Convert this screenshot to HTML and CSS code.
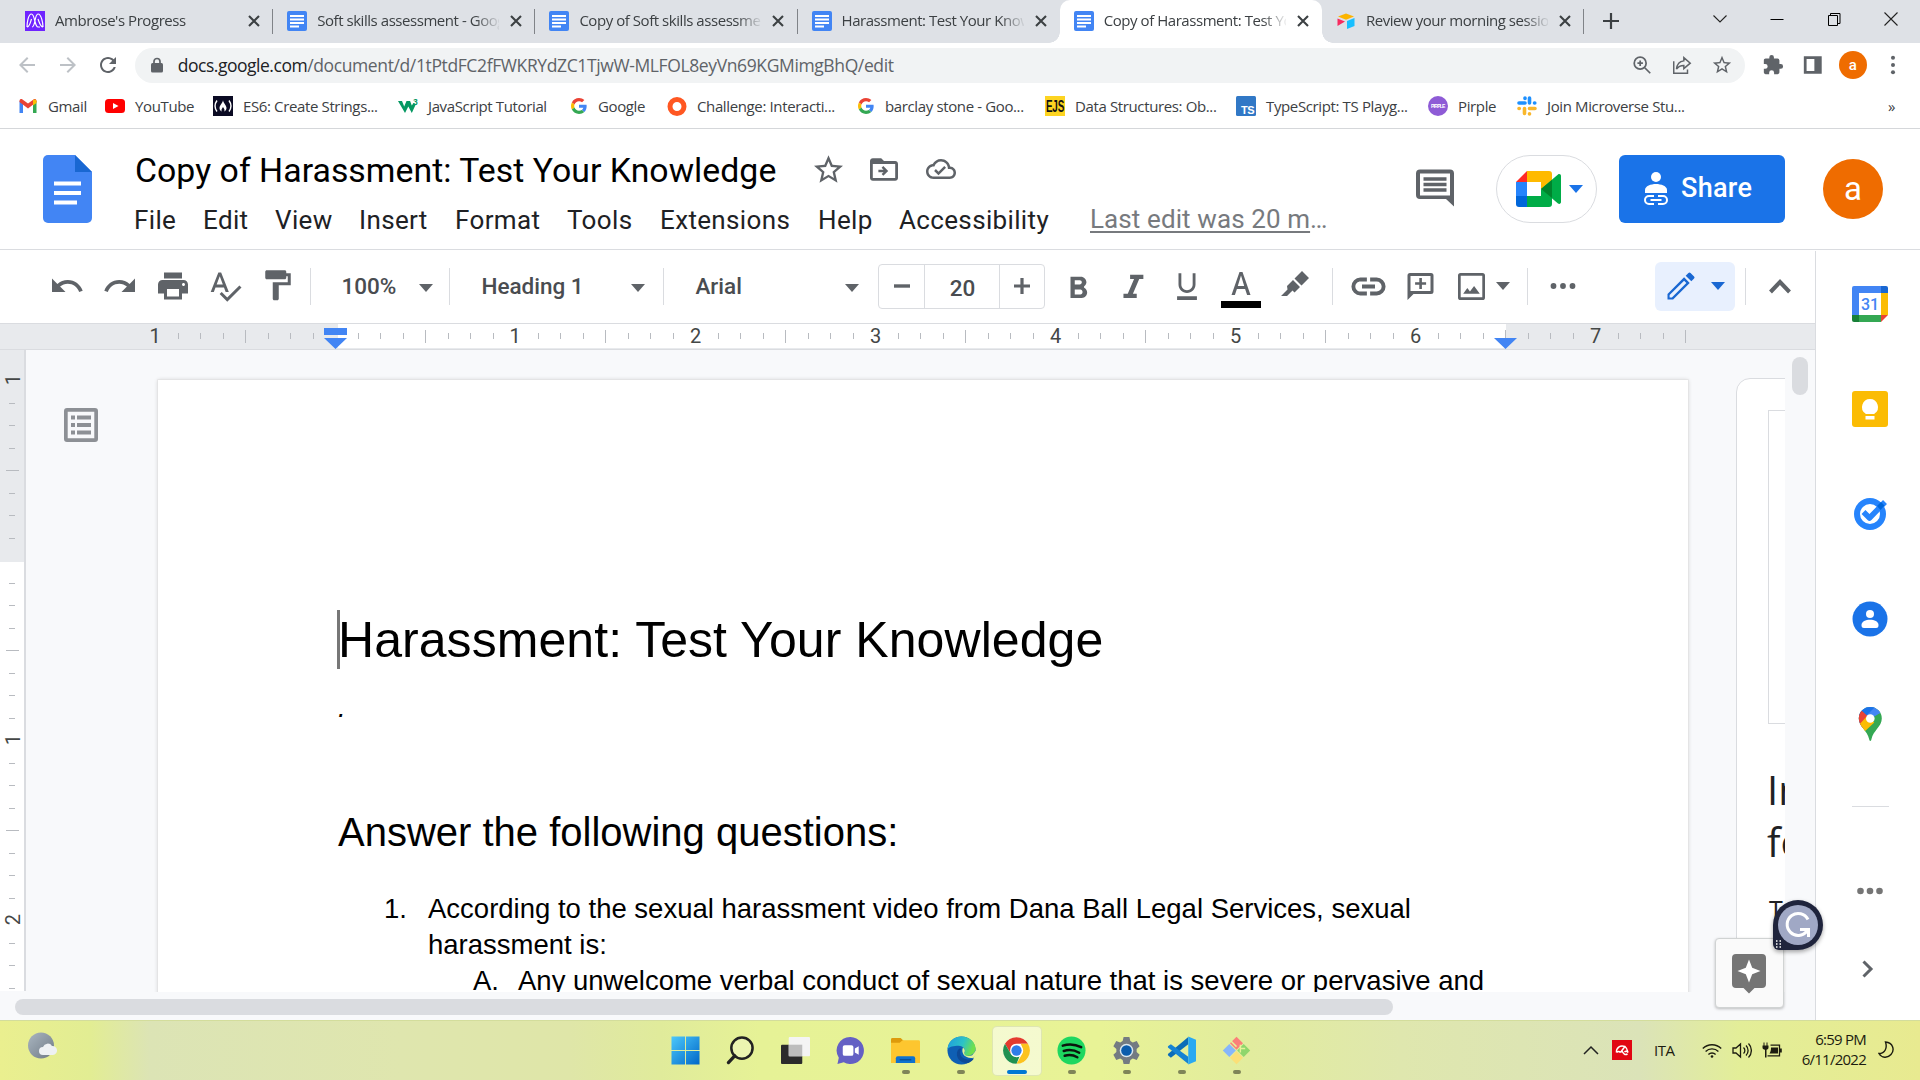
FILE: index.html
```html
<!DOCTYPE html>
<html lang="en">
<head>
<meta charset="utf-8">
<title>Copy of Harassment: Test Your Knowledge</title>
<link rel="stylesheet" href="styles.css">
</head>
<body>
<svg class="defs" width="0" height="0">
  <symbol id="docs" viewBox="0 0 20 20"><rect width="20" height="20" rx="2" fill="#4285f4"/><path d="M3 5h14M3 8.6h14M3 12h14M3 15.4h9" stroke="#fff" stroke-width="2" fill="none"/></symbol>
  <symbol id="x" viewBox="0 0 14 14"><path d="M2 2l10 10M12 2L2 12" stroke="#3c4043" stroke-width="2.1" fill="none"/></symbol>
  <symbol id="g" viewBox="0 0 48 48"><path fill="#ea4335" d="M24 9.5c3.54 0 6.71 1.22 9.21 3.6l6.85-6.85C35.9 2.38 30.47 0 24 0 14.62 0 6.51 5.38 2.56 13.22l7.98 6.19C12.43 13.72 17.74 9.5 24 9.5z"/><path fill="#4285f4" d="M46.98 24.55c0-1.57-.15-3.09-.38-4.55H24v9.02h12.94c-.58 2.96-2.26 5.48-4.78 7.18l7.73 6c4.51-4.18 7.09-10.36 7.09-17.65z"/><path fill="#fbbc05" d="M10.53 28.59c-.48-1.45-.76-2.99-.76-4.59s.27-3.14.76-4.59l-7.98-6.19C.92 16.46 0 20.12 0 24s.92 7.54 2.56 10.78l7.97-6.19z"/><path fill="#34a853" d="M24 48c6.48 0 11.93-2.13 15.89-5.81l-7.73-6c-2.15 1.45-4.92 2.3-8.16 2.3-6.26 0-11.57-4.22-13.47-9.91l-7.98 6.19C6.51 42.62 14.62 48 24 48z"/></symbol>
  <symbol id="caret" viewBox="0 0 14 8"><path d="M0 0h14L7 8z" fill="currentColor"/></symbol>
</svg>

<div class="tabs">
  <div class="tab"><svg class="fav" viewBox="0 0 20 20"><rect width="20" height="20" fill="#6f23ff"/><path d="M2 16c0-3 1-13 4.500-13S9.500 16 13 16s0 0 0 0M7 16c3.500 0 2.500-13 6-13S18 13 18 16M2 16c2.500 0 3-3.500 4.500-8M18 16c-2.500 0-3.500-4-5-8" fill="none" stroke="#fff" stroke-width="1.200"/></svg><span class="tt">Ambrose's Progress</span><svg class="x"><use href="#x"/></svg></div>
  <div class="tab"><svg class="fav"><use href="#docs"/></svg><span class="tt">Soft skills assessment - Google</span><svg class="x"><use href="#x"/></svg></div>
  <div class="tab"><svg class="fav"><use href="#docs"/></svg><span class="tt">Copy of Soft skills assessment</span><svg class="x"><use href="#x"/></svg></div>
  <div class="tab last"><svg class="fav"><use href="#docs"/></svg><span class="tt">Harassment: Test Your Knowledge</span><svg class="x"><use href="#x"/></svg></div>
  <div class="tab active"><svg class="fav"><use href="#docs"/></svg><span class="tt">Copy of Harassment: Test Your</span><svg class="x"><use href="#x"/></svg></div>
  <div class="tab"><svg class="fav" viewBox="0 0 20 20"><path d="M10 2.500l8 3-8 3.300-8-3.300z" fill="#fcb400"/><path d="M11 10l7.500-3v8L11 18z" fill="#18bfff"/><path d="M1.500 7.500L9 10.500 1.500 15z" fill="#f82b60"/></svg><span class="tt">Review your morning session</span><svg class="x"><use href="#x"/></svg></div>
  <svg class="plus" viewBox="0 0 16 16"><path d="M8 0v16M0 8h16" stroke="#3c4043" stroke-width="2.2"/></svg>
  <div class="win">
    <svg viewBox="0 0 16 16"><path d="M1.500 4.500L8 11l6.500-6.500" fill="none" stroke="#222" stroke-width="1.100"/></svg>
    <svg viewBox="0 0 16 16"><path d="M1.500 8.500h13" stroke="#000"/></svg>
    <svg viewBox="0 0 16 16"><path d="M2.500 4.500h9v10h-9zM4.500 4.500v-2h9.500v10h-2.500" fill="none" stroke="#000"/></svg>
    <svg viewBox="0 0 16 16"><path d="M1.500 1.500l13 13M14.500 1.500l-13 13" stroke="#222" stroke-width="1.100"/></svg>
  </div>
</div>

<div class="nav">
  <div class="slots nav-left">
    <svg viewBox="0 0 24 24"><path fill="#bdc1c6" d="M20 11H7.830l5.590-5.590L12 4l-8 8 8 8 1.410-1.410L7.830 13H20z"/></svg>
    <svg viewBox="0 0 24 24"><path fill="#bdc1c6" d="M12 4l-1.410 1.410L16.170 11H4v2h12.170l-5.580 5.590L12 20l8-8z"/></svg>
    <svg viewBox="0 0 24 24"><path fill="#5f6368" d="M17.650 6.350C16.200 4.900 14.210 4 12 4c-4.420 0-7.990 3.580-7.990 8s3.570 8 7.990 8c3.730 0 6.840-2.550 7.730-6h-2.080c-.82 2.330-3.040 4-5.650 4-3.310 0-6-2.690-6-6s2.690-6 6-6c1.660 0 3.140.69 4.220 1.780L13 11h7V4z"/></svg>
  </div>
  <div class="omni">
    <svg class="lock" viewBox="0 0 12 16"><path d="M3 7V4.500a3 3 0 016 0V7" fill="none" stroke="#5f6368" stroke-width="1.700"/><rect y="6" width="12" height="9.500" rx="1.500" fill="#5f6368"/></svg>
    <span class="url"><b>docs.google.com</b>/document/d/1tPtdFC2fFWKRYdZC1TjwW-MLFOL8eyVn69KGMimgBhQ/edit</span>
    <div class="slots omni-right">
      <svg viewBox="0 0 24 24" fill="none" stroke="#5f6368" stroke-width="1.900"><circle cx="10" cy="10" r="6.500"/><path d="M15 15l6 6M10 7v6M7 10h6"/></svg>
      <svg viewBox="0 0 24 24" fill="none" stroke="#5f6368" stroke-width="1.600"><path d="M3 8v13h15v-4M14 4l7 6-7 6v-3.500c-4 0-6 1-8 4 .5-5 3-8.500 8-9z"/></svg>
      <svg viewBox="0 0 24 24"><path fill="#5f6368" d="M22 9.240l-7.190-.62L12 2 9.190 8.630 2 9.240l5.460 4.730L5.820 21 12 17.270 18.180 21l-1.630-7.030zM12 15.400l-3.760 2.270 1-4.280-3.320-2.880 4.380-.38L12 6.100l1.710 4.040 4.380.38-3.320 2.880 1 4.280z"/></svg>
    </div>
  </div>
  <div class="slots nav-right">
    <svg viewBox="0 0 24 24"><path fill="#5f6368" d="M20.500 11H19V7c0-1.100-.9-2-2-2h-4V3.500a2.500 2.500 0 00-5 0V5H4c-1.100 0-2 .9-2 2v3.800h1.500a2.700 2.700 0 010 5.400H2V20c0 1.100.9 2 2 2h3.800v-1.500a2.700 2.700 0 015.400 0V22H17c1.100 0 2-.9 2-2v-4h1.500a2.500 2.500 0 000-5z"/></svg>
    <svg viewBox="0 0 24 24"><path fill="#5f6368" fill-rule="evenodd" d="M2 2.500h19.500v19H2zM5 5.500v13h8.500v-13z"/></svg>
    <span class="ava">a</span>
    <svg viewBox="0 0 24 24" fill="#5f6368"><circle cx="12" cy="4" r="2.200"/><circle cx="12" cy="12" r="2.200"/><circle cx="12" cy="20" r="2.200"/></svg>
  </div>
</div>

<div class="marks">
  <span><svg viewBox="0 0 20 20"><path d="M1.500 17V5l3.500 2.500V17z" fill="#4285f4"/><path d="M15 17V7.500L18.500 5v12z" fill="#34a853"/><path d="M1.500 5c0-2 2-2.500 3-1.500l5.500 4 5.500-4c1-1 3-.5 3 1.500v1L10 12.500 1.500 6z" fill="#ea4335"/><path d="M15 4c1.500-1.200 3.500-.5 3.500 1.200V7L15 9.500z" fill="#fbbc04"/></svg>Gmail</span>
  <span><svg viewBox="0 0 20 20"><rect y="3" width="20" height="14" rx="3.500" fill="#f00"/><path d="M8 7l5.500 3L8 13z" fill="#fff"/></svg>YouTube</span>
  <span><svg viewBox="0 0 20 20"><rect width="20" height="20" fill="#0a0a23"/><path d="M4 4.500c-2.500 3.500-2.500 7.500 0 11M16 4.500c2.500 3.500 2.500 7.500 0 11" stroke="#fff" stroke-width="1.400" fill="none"/><path d="M10 4c0 3-3.500 5-3.500 8 0 1.800 1.200 3 2.200 3.400-.8-2 .6-2.900 1.300-4.400.7 1.500 2.100 2.400 1.300 4.400 1-.4 2.200-1.600 2.200-3.400 0-3-3.500-5-3.500-8z" fill="#fff"/></svg>ES6: Create Strings...</span>
  <span><svg viewBox="0 0 20 20"><path d="M0 5h4l2.200 5.500L8.500 5h3.600l1.700 4.500L15.500 7l2 2-3.700 8-3.500-6.500L7 17z" fill="#059862"/><text x="15" y="8.500" font-family="Liberation Sans" font-size="8.500" font-weight="700" fill="#059862">3</text></svg>JavaScript Tutorial</span>
  <span><svg class="sm"><use href="#g"/></svg>Google</span>
  <span><svg viewBox="0 0 20 20"><circle cx="10" cy="10.500" r="7" fill="none" stroke="#ff5722" stroke-width="5"/></svg>Challenge: Interacti...</span>
  <span><svg class="sm"><use href="#g"/></svg>barclay stone - Goo...</span>
  <span><svg viewBox="0 0 20 20"><rect width="20" height="20" fill="#fdd421"/><text x="1" y="16" font-family="Liberation Sans" font-size="16" font-weight="700" textLength="18" lengthAdjust="spacingAndGlyphs" fill="#111">EJS</text></svg>Data Structures: Ob...</span>
  <span><svg viewBox="0 0 20 20"><rect width="20" height="20" rx="1.500" fill="#3178c6"/><text x="5" y="18" font-family="Liberation Sans" font-size="11" font-weight="700" fill="#fff">TS</text></svg>TypeScript: TS Playg...</span>
  <span><svg viewBox="0 0 20 20"><circle cx="10" cy="10" r="10" fill="#8e5bd6"/><text x="3" y="12" font-family="Liberation Sans" font-size="5" font-weight="700" textLength="14" fill="#fff">PIRPLE</text></svg>Pirple</span>
  <span><svg viewBox="0 0 20 20" stroke-width="3.600" stroke-linecap="round"><path d="M8 2v.5M2 7h6M12.500 2v5M17.500 7h.3" stroke="#1e90ff"/><path d="M2 12.500h.3M7.500 12.500v5M12.500 12.500h5.500M12.500 17.800v.2" stroke="#f9b72c"/></svg>Join Microverse Stu...</span>
  <span class="more">»</span>
</div>

<div class="head">
  <svg class="logo" viewBox="0 0 49 68"><path d="M5 0h27l17 17v46a5 5 0 01-5 5H5a5 5 0 01-5-5V5a5 5 0 015-5z" fill="#4285f4"/><path d="M32 0l17 17H32z" fill="#1967d2"/><path d="M11 28.500h27M11 38h27M11 47.500h23" stroke="#fff" stroke-width="4"/></svg>
  <div class="titles">
    <div class="title">Copy of Harassment: Test Your Knowledge
      <svg class="star" viewBox="2 2 20 19"><path fill="#5f6368" d="M22 9.240l-7.190-.62L12 2 9.190 8.630 2 9.240l5.460 4.730L5.820 21 12 17.270 18.180 21l-1.630-7.030zM12 15.400l-3.760 2.270 1-4.280-3.320-2.880 4.380-.38L12 6.100l1.710 4.040 4.380.38-3.320 2.880 1 4.280z"/></svg>
      <svg class="folder" viewBox="2 4 20 16"><path fill="#5f6368" d="M20 6h-8l-2-2H4c-1.100 0-2 .9-2 2v12c0 1.100.9 2 2 2h16c1.100 0 2-.9 2-2V8c0-1.100-.9-2-2-2zm0 12H4V8h16zM11.500 9.500l3.500 3.500-3.500 3.500-1.200-1.200 1.400-1.400H8v-1.800h3.700l-1.400-1.400z"/></svg>
      <svg class="cloud" viewBox="0 4 24 16"><path fill="#5f6368" d="M19.350 10.040C18.670 6.590 15.640 4 12 4 9.110 4 6.600 5.640 5.350 8.040 2.340 8.360 0 10.910 0 14c0 3.310 2.690 6 6 6h13c2.760 0 5-2.240 5-5 0-2.640-2.050-4.780-4.650-4.960zM19 18H6c-2.210 0-4-1.790-4-4s1.790-4 4-4h.71C7.370 7.690 9.480 6 12 6c3.040 0 5.500 2.460 5.500 5.500v.5H19c1.660 0 3 1.340 3 3s-1.340 3-3 3zm-9-3.820l-2.090-2.090L6.500 13.500 10 17l6.010-6.010-1.410-1.410z"/></svg>
    </div>
    <div class="menu"><span>File</span><span>Edit</span><span>View</span><span>Insert</span><span>Format</span><span>Tools</span><span>Extensions</span><span>Help</span><span>Accessibility</span><span class="last-edit"><u>Last edit was 20 m</u>…</span></div>
  </div>
  <svg class="cmt" viewBox="0 0 38 37"><path fill="#5f6368" fill-rule="evenodd" d="M4 0h30a4 4 0 014 4v33l-8-7.500H4a4 4 0 01-4-4V4a4 4 0 014-4zM4 4v22h30V4z"/><path d="M7.500 9.500h23M7.500 15h23M7.500 20.500h23" stroke="#5f6368" stroke-width="3.600"/></svg>
  <div class="meet">
    <svg class="cam" viewBox="0 0 45 36"><path d="M0 11L11 0v11z" fill="#ff2a26"/><path d="M0 11h11v14H0z" fill="#2684fc"/><path d="M0 25h11v11H3a3 3 0 01-3-3z" fill="#0066da"/><path d="M11 0h22a3 3 0 013 3v10l-11 6v-8H11z" fill="#ffba00"/><path d="M11 25h14v-7l11 7v8a3 3 0 01-3 3H11z" fill="#00ac47"/><path d="M25 18l17-14.500c1.500-1 3 0 3 1.500v26c0 1.500-1.500 2.500-3 1.500z" fill="#00ac47"/><path d="M25 18l11-9v18z" fill="#00832d"/></svg>
    <svg class="caret blue"><use href="#caret"/></svg>
  </div>
  <div class="share"><svg viewBox="0 0 26 34"><circle cx="13" cy="5" r="5" fill="#fff"/><path d="M2 21v-3c0-4 6-6 11-6s11 2 11 6v3z" fill="#fff"/><path d="M11 24H6a4 4 0 000 8h5M15 24h5a4 4 0 010 8h-5M7.500 28h11" fill="none" stroke="#fff" stroke-width="2"/></svg>Share</div>
  <div class="avatar">a</div>
</div>

<div class="main">
  <div class="left">
    <div class="bar">
      <i class="ic"><svg viewBox="0 0 24 24"><path d="M12.500 8c-2.650 0-5.050.99-6.900 2.600L2 7v9h9l-3.620-3.620c1.390-1.160 3.160-1.880 5.120-1.880 3.540 0 6.550 2.310 7.600 5.500l2.370-.78C21.080 11.030 17.150 8 12.500 8z"/></svg></i>
      <i class="ic"><svg viewBox="0 0 24 24"><path d="M18.400 10.600C16.550 8.990 14.150 8 11.500 8c-4.650 0-8.580 3.030-9.960 7.220L3.900 16c1.050-3.190 4.050-5.500 7.600-5.500 1.950 0 3.730.72 5.120 1.880L13 16h9V7z"/></svg></i>
      <i class="ic"><svg viewBox="0 0 24 24"><path d="M19 8H5c-1.660 0-3 1.340-3 3v6h4v4h12v-4h4v-6c0-1.660-1.340-3-3-3zm-3 11H8v-5h8zm3-7c-.55 0-1-.45-1-1s.45-1 1-1 1 .45 1 1-.45 1-1 1zm-1-9H6v4h12z"/></svg></i>
      <i class="ic"><svg viewBox="0 0 24 24"><path d="M12.450 16h2.090L9.430 3H7.570L2.460 16h2.090l1.120-3h5.640zm-6.020-5L8.500 5.480 10.570 11zm15.160.59l-8.090 8.090L9.830 16l-1.410 1.410 5.090 5.090L23 13z"/></svg></i>
      <i class="ic"><svg viewBox="0 0 24 24"><path d="M18 4V3c0-.55-.45-1-1-1H5c-.55 0-1 .45-1 1v4c0 .55.45 1 1 1h12c.55 0 1-.45 1-1V6h1v4H9v11c0 .55.450 1 1 1h2c.550 0 1-.450 1-1v-9h8V4z" transform="translate(-.5 -.5)"/></svg></i>
      <i class="sep s1"></i>
      <span class="dd d1">100%<svg class="caret"><use href="#caret"/></svg></span>
      <i class="sep s2"></i>
      <span class="dd d2">Heading 1<svg class="caret"><use href="#caret"/></svg></span>
      <i class="sep s3"></i>
      <span class="dd d2">Arial<svg class="caret"><use href="#caret"/></svg></span>
      <span class="size"><span><svg viewBox="0 0 16 16"><path d="M0 8h16" stroke="#5f6368" stroke-width="3.400"/></svg></span><span class="num">20</span><span><svg viewBox="0 0 16 16"><path d="M0 8h16M8 0v16" stroke="#5f6368" stroke-width="3.200"/></svg></span></span>
      <i class="ic w b"><svg viewBox="0 0 24 24"><path d="M15.600 10.790c.97-.67 1.650-1.770 1.650-2.790 0-2.260-1.750-4-4-4H6v15h8.040c2.090 0 3.710-1.700 3.710-3.790 0-1.520-.86-2.820-2.150-3.420zM9 6.500h3.500c.83 0 1.500.67 1.500 1.500s-.67 1.500-1.500 1.500H9zm4 10H9v-3.500h4c.83 0 1.500.67 1.500 1.750S13.830 16.500 13 16.500z"/></svg></i>
      <i class="ic w"><svg viewBox="1.500 0.500 20.500 20.500"><path d="M10 4v2.600h2.400l-3.800 8.800H6V18h8v-2.600h-2.300l3.800-8.800H18V4z"/></svg></i>
      <i class="ic w"><svg viewBox="0 0 24 24"><path d="M12 17c3.310 0 6-2.690 6-6V3h-2v8c0 2.200-1.800 4-4 4s-4-1.800-4-4V3H6v8c0 3.310 2.690 6 6 6zm-7 2.300v2.500h14v-2.500z"/></svg></i>
      <i class="ic w col"><svg viewBox="0 0 40 40"><path d="M18.500 4h3l8 23h-3.400l-2-6h-8.200l-2 6h-3.400zm-1.700 14h6.400L20 7.500z"/><path d="M0 33h40v7H0z" fill="#000"/></svg></i>
      <i class="ic w"><svg viewBox="0 0 34 34"><path d="M24 2l7 7-7.500 7.500-7-7zM15 11l7 7-5.500 5.500-2-2L9 27H3l6.500-6.500-.5-3.500z"/></svg></i>
      <i class="sep s4"></i>
      <i class="ic l"><svg viewBox="0 0 24 24"><path d="M3.900 12c0-1.710 1.390-3.100 3.100-3.100h4V6.500H7a5.500 5.500 0 000 11h4v-2.400H7c-1.710 0-3.100-1.390-3.100-3.100zM8 13.200h8v-2.400H8zm9-6.700h-4v2.400h4a3.100 3.100 0 010 6.200h-4v2.400h4a5.500 5.500 0 000-11z"/></svg></i>
      <i class="ic l2"><svg viewBox="0 0 26 27"><path fill-rule="evenodd" d="M2.500 0h21A2.500 2.500 0 0126 2.500v16a2.500 2.500 0 01-2.500 2.500H6l-6 6V2.500A2.500 2.500 0 012.500 0zM3 3v15h20V3zM11.800 5h2.600v4.200h4.200v2.600h-4.200V16h-2.600v-4.200H7.600V9.200h4.200z"/></svg></i>
      <i class="ic l3"><svg viewBox="0 0 26 26"><path fill-rule="evenodd" d="M2.500 0h21A2.500 2.500 0 0126 2.500v21a2.500 2.500 0 01-2.500 2.500h-21A2.500 2.500 0 010 23.500v-21A2.500 2.500 0 012.500 0zM2.600 2.600v20.800h20.800V2.600zM5 20l4-5.500 2.500 3.300 4-5.300L21 20z"/></svg></i>
      <svg class="caret"><use href="#caret"/></svg>
      <i class="sep s5"></i>
      <i class="ic dots"><svg viewBox="0 0 26 26"><circle cx="3.500" cy="13" r="2.900"/><circle cx="13" cy="13" r="2.900"/><circle cx="22.500" cy="13" r="2.900"/></svg></i>
      <span class="pen"><svg viewBox="2 2 20 20"><path fill="#1967d2" d="M3 17.250V21h3.750L17.810 9.940l-3.750-3.750zM5.920 19.600H4.400v-1.520l9.660-9.660 1.520 1.520zM20.710 7.040a1 1 0 000-1.410l-2.340-2.340a1 1 0 00-1.410 0l-1.830 1.830 3.750 3.750z"/></svg><svg class="caret"><use href="#caret"/></svg></span>
      <i class="sep s6"></i>
      <i class="ic up"><svg viewBox="0 0 22 16"><path d="M1.500 14L11 4l9.500 10" fill="none" stroke="#5f6368" stroke-width="4"/></svg></i>
    </div>
    <svg class="ruler" viewBox="0 323 1815 27">
      <defs><pattern id="h" patternUnits="userSpaceOnUse" x="245" y="0" width="180" height="400"><path fill="#b8bbc0" d="M0 330h1v13H0zM23 333h1v6h-1zM45 333h1v6h-1zM68 333h1v6h-1zM113 333h1v6h-1zM135 333h1v6h-1zM158 333h1v6h-1z"/></pattern></defs>
      <rect y="323" width="1815" height="27" fill="#e8eaed"/><rect x="338" y="323" width="1168" height="25" fill="#fff"/>
      <path d="M0 323.500h1815M0 349.500h1815" stroke="#dadce0"/>
      <rect x="160" y="324" width="1527" height="24" fill="url(#h)"/><rect x="1505" y="330" width="1" height="13" fill="#b8bbc0"/>
      <g class="rt"><text x="155" y="343">1</text><text x="515" y="343">1</text><text x="695.500" y="343">2</text><text x="875.500" y="343">3</text><text x="1055.500" y="343">4</text><text x="1235.500" y="343">5</text><text x="1415.500" y="343">6</text><text x="1595.500" y="343">7</text></g>
      <path d="M324 328h23v7h-23zM324 338h23l-11.500 11zM1494 338h23l-11.500 11z" fill="#4285f4"/>
    </svg>
    <div class="work">
      <svg class="vruler" viewBox="0 350 26 641">
        <defs><pattern id="v" patternUnits="userSpaceOnUse" x="0" y="470" width="30" height="180"><path fill="#b8bbc0" d="M6 0h13v1H6zM9 23h6v1H9zM9 45h6v1H9zM9 68h6v1H9zM9 113h6v1H9zM9 135h6v1H9zM9 158h6v1H9z"/></pattern></defs>
        <rect y="350" width="26" height="212" fill="#e8eaed"/><rect y="562" width="24" height="429" fill="#fff"/><path d="M25 350v641" stroke="#dadce0" stroke-width="2"/>
        <rect y="400" width="24" height="591" fill="url(#v)"/>
        <g class="rt"><text transform="translate(20 379.500) rotate(-90)">1</text><text transform="translate(20 739.500) rotate(-90)">1</text><text transform="translate(20 919.500) rotate(-90)">2</text></g>
      </svg>
      <div class="outline"><svg viewBox="0 0 34 34" fill="#8d9095"><path fill-rule="evenodd" d="M3 0h28a3 3 0 013 3v28a3 3 0 01-3 3H3a3 3 0 01-3-3V3a3 3 0 013-3zM3.700 3.700v26.600h26.600V3.700z"/><path d="M7 7.500h4v4H7zM13 7.500h14v4H13zM7 15h4v4H7zM13 15h14v4H13zM7 22.500h4v4H7zM13 22.500h14v4H13z"/></svg></div>
      <div class="page">
        <h1><i class="cursor"></i>Harassment: Test Your Knowledge</h1>
        <p class="dot"><em>.</em></p>
        <h2>Answer the following questions:</h2>
        <div class="li"><span>1.</span><div>According to the sexual harassment video from Dana Ball Legal Services, sexual<br>harassment is:</div></div>
        <div class="li sub"><span>A.</span><div>Any unwelcome verbal conduct of sexual nature that is severe or pervasive and</div></div>
      </div>
      <div class="clip"><div class="card"><div class="inner"></div><div class="ct">Introduction<br>for</div><div class="cs">Try<br>(<br>(</div></div></div>
      <div class="vthumb"></div>
    </div>
    <div class="hscroll"><div class="hthumb"></div></div>
    <div class="explore"><svg viewBox="0 0 34 40"><path d="M4 0h26a4 4 0 014 4v26a4 4 0 01-4 4h-7.500L17 39.500 11.500 34H4a4 4 0 01-4-4V4a4 4 0 014-4z" fill="#757575"/><path d="M17 5.500l3.200 8.300L28.500 17l-8.300 3.200L17 28.500l-3.200-8.300L5.500 17l8.300-3.200z" fill="#fff"/></svg></div>
    <svg class="gram" viewBox="0 0 50 50"><path d="M25 0a25 25 0 010 50H6a6 6 0 01-6-6V25A25 25 0 0125 0z" fill="#1f243c"/><circle cx="25" cy="25" r="20" fill="#a0a8c5"/><path d="M35 19.500A11 11 0 1034 31" fill="none" stroke="#fff" stroke-width="3"/><path d="M27 29.500h8.500V37" fill="none" stroke="#fff" stroke-width="3"/><path d="M3 41h1.500M6.500 41H8M3 44h1.500M6.500 44H8M3 47h1.500M6.500 47H8" stroke="#fff" stroke-width="1.300"/></svg>
  </div>
  <div class="side">
    <svg viewBox="0 0 36 36"><path d="M2 0h27v7H7v22H0V2a2 2 0 012-2z" fill="#4285f4"/><path d="M29 0h5a2 2 0 012 2v5h-7z" fill="#1967d2"/><path d="M29 7h7v22h-7z" fill="#fbbc04"/><path d="M7 29h22v7H7z" fill="#34a853"/><path d="M0 29h7v7H2a2 2 0 01-2-2z" fill="#188038"/><path d="M29 29h7l-7 7z" fill="#ea4335"/><path d="M7 7h22v22H7z" fill="#fff"/><text x="18" y="24" text-anchor="middle" font-family="Roboto" font-size="16" font-weight="500" fill="#4285f4">31</text></svg>
    <svg viewBox="0 0 36 36"><rect width="36" height="36" rx="3" fill="#fbbc04"/><path d="M18 8a8 8 0 00-4.500 14.600V23h9v-.4A8 8 0 0018 8zM13.500 25h9v3.500h-9z" fill="#fff"/></svg>
    <svg viewBox="0 0 36 36"><circle cx="18" cy="18" r="13" fill="none" stroke="#2684fc" stroke-width="6"/><path d="M11.500 16l6 6L33 6" fill="none" stroke="#2684fc" stroke-width="5.500" stroke-linejoin="round"/><path d="M25 10l4-4 3.500 3.500-4 4.500z" fill="#0066da"/></svg>
    <svg viewBox="0 0 36 36"><circle cx="18" cy="18" r="17.500" fill="#1a73e8"/><circle cx="18" cy="13" r="4" fill="#fff"/><path d="M9.500 24c0-7 17-7 17 0 0 2-.5 3-2.500 3H12c-2 0-2.500-1-2.500-3z" fill="#fff"/></svg>
    <svg viewBox="0 0 36 36"><clipPath id="pin"><path d="M18.300 1a11.500 11.500 0 00-11.500 11.500c0 8 8.500 12 10.300 20.500.3 2.500 2.100 2.500 2.400 0C21.300 24.500 29.800 20.500 29.800 12.500A11.500 11.500 0 0018.300 1z"/></clipPath><g clip-path="url(#pin)"><path d="M0 0h36v36H0z" fill="#34a853"/><path d="M0 0h40L18 13 6 27z" fill="#4285f4"/><path d="M0 0h24L10 14z" fill="#1a73e8"/><path d="M0 2l10 3 8.300 7.500L6 27z" fill="#ea4335"/><path d="M6 20l10-11 2.300 3.500 4 4L11 27z" fill="#fbbc04"/></g><circle cx="18.300" cy="12.500" r="4.300" fill="#fff"/></svg>
    <i class="line"></i>
    <svg class="sd" viewBox="0 0 26 8" fill="#757575"><circle cx="3.500" cy="4" r="3.300"/><circle cx="13" cy="4" r="3.300"/><circle cx="22.500" cy="4" r="3.300"/></svg>
    <svg class="sc" viewBox="0 0 12 18"><path d="M1.500 1.500L9 9l-7.500 7.500" fill="none" stroke="#5f6368" stroke-width="3"/></svg>
  </div>
</div>

<div class="task">
  <div class="weather"><svg viewBox="0 0 30 28"><defs><linearGradient id="w" x2="1" y2="1"><stop stop-color="#aab6c0"/><stop offset="1" stop-color="#6f7a86"/></linearGradient></defs><circle cx="14" cy="13.500" r="13" fill="url(#w)"/><path d="M16 23a4 4 0 010-8 5 5 0 019-1 4.500 4.500 0 011 9z" fill="#eef1f4"/></svg></div>
  <div class="apps">
    <span><svg viewBox="0 0 30 30"><defs><linearGradient id="wi" x2="1" y2="1"><stop stop-color="#4cc8fb"/><stop offset="1" stop-color="#0067c8"/></linearGradient></defs><path d="M.5.500h14v14H.5zM15.500.500h14v14h-14zM.5 15.500h14v14H.5zM15.500 15.500h14v14h-14z" fill="url(#wi)"/></svg></span>
    <span><svg viewBox="0 0 30 30"><circle cx="16.500" cy="12.500" r="11" fill="#fff" fill-opacity=".25" stroke="#222" stroke-width="2.600"/><path d="M9 20.500L2.500 27.500" stroke="#222" stroke-width="3.400" stroke-linecap="round"/></svg></span>
    <span><svg viewBox="0 0 30 30"><rect y="9" width="22" height="20" rx="1" fill="#2b2b2b"/><rect x="8" y="1" width="22" height="20" rx="1" fill="#f4f4f4"/><path d="M8 9h14v12H8z" fill="#bdbdbd"/></svg></span>
    <span><svg viewBox="0 0 30 30"><path d="M15 1a14 14 0 11-7 26.200L1.500 29l1.400-6.500A14 14 0 0115 1z" fill="#6460c4"/><rect x="7" y="9.500" width="11" height="11" rx="2" fill="#fff"/><path d="M19.500 13l4-2.500v9l-4-2.500z" fill="#fff"/></svg></span>
    <span class="on"><svg viewBox="0 0 30 30"><path d="M0 3.500a1.500 1.500 0 011.500-1.500H10l3 3-3 3H0z" fill="#dd9a0c"/><path d="M0 7h9l3-2.500h16.500A1.500 1.500 0 0130 6v22H0z" fill="#fdc62f"/><path d="M5 28v-5a2 2 0 012-2h16a2 2 0 012 2v5z" fill="#0f72cf"/><path d="M9 24.500h12" stroke="#0a4f97" stroke-width="1.500"/></svg></span>
    <span class="on"><svg viewBox="0 0 30 30"><defs><linearGradient id="e" x2="1" y2=".3"><stop stop-color="#1e9be0"/><stop offset=".6" stop-color="#2cc3c6"/><stop offset="1" stop-color="#6fe04c"/></linearGradient></defs><circle cx="15" cy="15" r="14.500" fill="#0f5fb4"/><path d="M.5 14C1 5 8 .5 15 .500c9 0 15 7 14.500 13-.4 5-5 7.500-9.500 7-3-.5-3-1.500-2-3 2-3-1-7.500-6-7.500-5 0-10 1-11.500 4z" fill="url(#e)"/><path d="M16.500 12c-2.500 6 2.500 12 11 10.500l2.500-3V15l-4 5c-4 1.500-9 .5-8-3 1-1.500.5-3-1.500-5z" fill="#e6f298"/><path d="M11 15c-3 7 3 14 11 13 2-.8 4.500-2.500 6-5-6 3-14 .5-14.500-5.500 0-1.500.5-3 1.500-4.500-1.500-.5-3 0-4 2z" fill="#0e4a97"/></svg></span>
    <span class="on act"><svg viewBox="0 0 48 48"><circle cx="24" cy="24" r="22" fill="#fff"/><path d="M4.900 13a22 22 0 0138.200 0H24a11 11 0 00-9.500 5.500v11z" fill="#e33b2e"/><path d="M43.100 13A22 22 0 0124 46l9.500-16.500A11 11 0 0033.500 18.500L31 13z" fill="#fcc31e"/><path d="M4.900 13l9.600 16.500A11 11 0 0024 35a11 11 0 005-1.200L24 46A22 22 0 014.900 13z" fill="#209150"/><circle cx="24" cy="24" r="10.500" fill="#fff"/><circle cx="24" cy="24" r="8.500" fill="#2f7de9"/></svg></span>
    <span class="on"><svg viewBox="0 0 30 30"><circle cx="15" cy="15" r="14.500" fill="#1ed760"/><path d="M6 10c6-2 13-1.500 19 1.500M7 15.500c5-1.500 11-1 16 1.800M8 20.500c4-1.200 9-.8 13 1.500" fill="none" stroke="#0b150d" stroke-width="2.600" stroke-linecap="round"/></svg></span>
    <span class="on"><svg viewBox="0 0 30 30"><path d="M12 1h6l1 4.200 2.500 1.400L25.600 5.300l3 5.200L25.500 13.500v3l3.100 3-3 5.200-4.100-1.300-2.500 1.400L18 29h-6l-1-4.200-2.500-1.400-4.100 1.300-3-5.200 3.100-3v-3l-3.100-3 3-5.200 4.100 1.300L11 5.200z" fill="#747b82"/><circle cx="15" cy="15" r="7" fill="#d9e6ee"/><circle cx="15" cy="15" r="5.500" fill="#0b5cad"/></svg></span>
    <span class="on"><svg viewBox="0 0 30 30"><path d="M22 1v7.500L4 22.500 1 20l0-1.500z" fill="#0b6cb8"/><path d="M22 29v-7.500L4 8.500 1 10.500v1.500z" fill="#1583d3"/><path d="M22 .500l8 3.500v22l-8 3.500z" fill="#29a9f2"/></svg></span>
    <span class="on"><svg viewBox="0 0 30 30"><g transform="rotate(45 15 15)"><path d="M5 5h9.500v9.500H5z" fill="#fb7f79"/><path d="M15.500 5h9.500v9.500h-9.500z" fill="#8fd66c"/><path d="M5 15.500h9.500v9.500H5z" fill="#86b6fb"/><path d="M15.500 15.500h9.500v9.500h-9.500z" fill="#fbdf77"/></g><path d="M9 5l6 6M19 9v8M19 13h5" stroke="#e6f298" stroke-width="1.500" fill="none"/></svg></span>
  </div>
  <div class="tray">
    <svg class="t1" viewBox="0 0 16 10"><path d="M1 9l7-7 7 7" fill="none" stroke="#222" stroke-width="1.500"/></svg>
    <svg class="t2" viewBox="0 0 20 20"><rect width="20" height="20" fill="#e10613"/><path d="M4.500 12.500C4 8 8 4.500 13 6.500c2 1.500 2.500 3.500 3 6-1.200-1.500-2.500-1.500-3.500-.5M4.500 12.500c1.200-1.500 3-1.500 4 0M12.500 7L8.500 12.500M10 11c1.500 3 3 4.500 5.500 3" fill="none" stroke="#fff" stroke-width="1.500"/></svg>
    <span class="ita">ITA</span>
    <svg class="t3" viewBox="0 0 20 16" fill="none" stroke="#1c1c10" stroke-width="1.400"><path d="M.8 6a13 13 0 0118.400 0M3.600 9a9 9 0 0112.800 0M6.400 12a5 5 0 017.200 0"/><circle cx="10" cy="14" r="1.300" fill="#1c1c10" stroke="none"/></svg>
    <svg class="t4" viewBox="0 0 20 16" fill="none" stroke="#1c1c10" stroke-width="1.300"><path d="M1 5.500h3L8.500 1.500v13L4 10.500H1zM11.500 5a4 4 0 010 6M14 3a7 7 0 010 10M16.500 1a10 10 0 010 14"/></svg>
    <svg class="t5" viewBox="0 0 20 16" fill="#1c1c10"><path d="M1.500 0h1v3h2V0h1v3h1v2c0 1.500-1 2-2 2.300V15H3V7.300C1.500 7 .5 6.500.5 5V3h1z"/><path d="M9 5h7v6H7.500C8.500 9.500 9 8 9 5z"/><path d="M8.500 2.700h9v10.600H5.500" fill="none" stroke="#1c1c10" stroke-width="1.300"/><path d="M18 6h1.800v4H18z"/></svg>
    <div class="time">6:59 PM<br>6/11/2022</div>
    <svg class="t6" viewBox="0 0 16 18"><path d="M7.500 1c7.500.5 9.500 8 5.500 12.500-3.500 4-9.500 3.500-12-1C7 12.500 9.500 7 7.500 1z" fill="none" stroke="#1c1c10" stroke-width="1.400"/></svg>
  </div>
</div>
</body>
</html>
```
FILE: styles.css
```css
* { box-sizing: border-box; }
body { margin: 0; width: 1920px; height: 1080px; overflow: hidden; background: #fff; font-family: "Open Sans", sans-serif; display: flex; flex-direction: column; }
svg { display: block; flex: none; }
i { font-style: normal; }
.defs { position: absolute; }

/* browser tabs */
.tabs { height: 43px; background: #dee1e6; display: flex; padding-left: 11px; flex: none; align-items: stretch; }
.tab { width: 262.2px; display: flex; align-items: center; padding: 0 0 1px 14px; position: relative; flex: none; }
.tab::after { content: ""; position: absolute; right: 0; top: 9px; width: 1px; height: 25px; background: #808388; }
.tab.last::after { display: none; }
.fav { width: 20px; height: 20px; margin-right: 10px; }
.tt { width: 182px; font-size: 15px; letter-spacing: -.45px; color: #3c4043; white-space: nowrap; overflow: hidden; line-height: 24px; padding-bottom: 2px; -webkit-mask-image: linear-gradient(90deg, #000 158px, transparent 184px); mask-image: linear-gradient(90deg, #000 158px, transparent 184px); }
.x { width: 14px; height: 14px; margin-left: 10px; }
.active { background: #fff; border-radius: 10px 10px 0 0; }
.tab.active::after, .tab.active::before { content: ""; position: absolute; display: block; top: auto; bottom: 0; width: 11px; height: 11px; background: radial-gradient(circle at 0 0, transparent 10.500px, #fff 11px); }
.tab.active::before { left: -11px; }
.tab.active::after { right: -11px; background: radial-gradient(circle at 100% 0, transparent 10.500px, #fff 11px); }
.plus { width: 16px; height: 16px; margin: 13px 0 0 19px; }
.win { margin-left: auto; display: flex; }
.win svg { width: 16px; height: 16px; margin: 11px 20.600px 0; }

/* address bar */
.nav { height: 45px; display: flex; align-items: center; padding: 0 0 1px 6px; flex: none; }
.slots { display: flex; align-items: center; }
.slots > * { width: 24px; height: 24px; margin: 0 8px; }
.nav-left { margin-left: 1px; }
.nav-left > * { margin: 0 8.300px; }
.omni { margin-left: 6px; width: 1610px; height: 35px; border-radius: 18px; background: #f1f3f4; display: flex; align-items: center; padding: 0 3px 0 16px; }
.lock { width: 12px; height: 16px; }
.url { margin-left: 15px; font-size: 17.500px; letter-spacing: -.38px; color: #5f6368; white-space: nowrap; }
.url b { font-weight: 400; color: #202124; letter-spacing: -.48px; }
.omni-right { margin-left: auto; }
.omni-right > * { width: 22px; height: 22px; margin: 0 9px; }
.nav-right { margin-left: 8px; }
.nav-right > * { width: 22px; height: 22px; margin: 0 9px; }
.nav-right > .ava { width: 28px; height: 28px; margin: 0 6px; border-radius: 50%; background: #ef6c00; color: #fff; font: 500 15px/28px Roboto, sans-serif; text-align: center; }

/* bookmarks */
.marks { height: 41px; flex: none; border-bottom: 1px solid #d5d7da; display: grid; grid-template-columns: 87px 108px 185px 170px 99px 188px 190px 191px 192px 89px 371px 20px; padding: 0 0 5px 18px; align-items: center; }
.marks span { display: flex; align-items: center; font-size: 15px; letter-spacing: -.37px; color: #3c4043; white-space: nowrap; }
.marks svg { width: 20px; height: 20px; margin-right: 10px; }
.marks .sm { width: 16px; height: 16px; margin: 0 11px 0 3px; }

/* document header */
.head { height: 121px; flex: none; border-bottom: 1px solid #dadce0; display: flex; padding: 26px 37px 0 43px; font-family: Roboto, sans-serif; }
.logo { width: 49px; height: 68px; }
.titles { margin: -4px 0 0 43px; width: 1200px; flex: none; }
.title { font-size: 33.800px; line-height: 40px; letter-spacing: .03px; color: #000; display: flex; align-items: center; white-space: nowrap; }
.star { width: 29px; height: 28px; margin: -5px 0 0 38px; }
.folder { width: 28px; height: 23px; margin-left: 27px; margin-top: -4px; }
.cloud { width: 30px; height: 20px; margin-left: 28px; margin-top: -4px; }
.menu { margin: 11px 0 0 -1px; display: grid; grid-template-columns: 69px 72px 84px 96px 112px 93px 158px 81px 191px 240px; font-size: 26px; line-height: 36px; letter-spacing: .35px; color: #202124; white-space: nowrap; }
.last-edit { color: #777a7e; letter-spacing: .1px; margin-top: -1px; }
.last-edit u { text-decoration-thickness: 2px; text-underline-offset: 3px; text-decoration-skip-ink: none; }
.cmt { width: 38px; height: 38px; margin: 14px 0 0 81px; }
.meet { width: 101px; height: 68px; border: 1px solid #dadce0; border-radius: 34px; margin-left: 42px; display: flex; align-items: center; padding-left: 19px; }
.cam { width: 45px; height: 36px; }
.caret { width: 14px; height: 8px; color: #5f6368; }
.blue { color: #1a73e8; margin-left: 8px; }
.share { width: 166px; height: 68px; border-radius: 6px; background: #1a73e8; margin-left: 22px; color: #fff; font: 500 27px/66px Roboto, sans-serif; letter-spacing: .3px; display: flex; padding-left: 24px; }
.share svg { width: 26px; height: 34px; margin: 17px 12px 0 0; }
.avatar { width: 60px; height: 60px; border-radius: 50%; background: #ef6c00; color: #fff; font-size: 33px; line-height: 59px; text-align: center; margin: 4px 0 0 38px; }

/* toolbar */
.main { height: 770px; flex: none; display: flex; }
.left { width: 1815px; flex: none; position: relative; display: flex; flex-direction: column; }
.bar { height: 73px; flex: none; display: flex; align-items: center; padding: 0 0 1px 41px; font-family: Roboto, sans-serif; font-weight: 500; font-size: 22.500px; color: #494c50; }
.ic { width: 52.700px; flex: none; display: flex; justify-content: center; }
.ic svg { width: 36px; height: 36px; fill: #5f6368; }
.w { width: 53.800px; }
.w svg { width: 34px; height: 34px; }
.b { margin-left: 7px; }
.b svg { margin-top: 3px; }
.ic.col svg { width: 40px; height: 40px; margin-top: 4px; }
.sep { width: 1px; height: 37px; background: #dadce0; flex: none; }
.s1 { margin: 0 30px 0 6px; }
.s2 { margin: 0 31px 0 16px; }
.s3 { margin: 0 31px 0 18px; }
.s4 { margin: 0 9px 0 11px; }
.s5 { margin: 0 10px 0 17px; }
.s6 { margin: 0 10px; }
.dd { display: flex; justify-content: space-between; align-items: center; flex: none; }
.dd .caret { margin-top: 4px; }
.d1 { width: 92px; }
.d2 { width: 164px; }
.size { width: 167px; height: 45px; margin-left: 19px; border: 1px solid #dadce0; border-radius: 4px; display: grid; grid-template-columns: 45px 76px 44px; flex: none; }
.size span { display: flex; align-items: center; justify-content: center; }
.size svg { width: 16px; height: 16px; }
.size .num { border: solid #dadce0; border-width: 0 1px; padding-top: 3px; }
.l { width: 52px; } .l2 { width: 52px; } .l3 { width: 50px; }
.l svg { width: 39px; height: 39px; }
.l2 svg, .l3 svg { width: 27px; height: 27px; }
.dots { width: 50px; }
.dots svg { width: 26px; height: 26px; }
.pen { width: 80px; height: 49px; border-radius: 6px; background: #e8f0fe; margin-left: 67px; display: flex; align-items: center; padding-left: 11px; flex: none; }
.pen svg { width: 30px; height: 30px; }
.pen .caret { width: 14px; height: 8px; color: #1967d2; margin-left: 15px; }
.up { width: 48px; }
.up svg { width: 22px; height: 16px; }

/* rulers */
.ruler { width: 1815px; height: 27px; }
.rt { font: 20px Roboto, sans-serif; fill: #444746; text-anchor: middle; }
.vruler { width: 26px; height: 641px; }

/* document */
.work { height: 642px; background: #f8f9fb; display: flex; overflow: hidden; position: relative; flex: none; }
.outline { width: 132px; padding: 58px 0 0 38px; flex: none; }
.outline svg { width: 34px; height: 34px; }
.page { width: 1530px; height: 2000px; margin-top: 30px; flex: none; background: #fff; box-shadow: 0 0 0 .750px #e4e4e4, 0 0 4px #ccc; padding: 227px 0 0 180px; font-family: "Liberation Sans", sans-serif; color: #000; white-space: nowrap; }
h1, h2, p { margin: 0; font-weight: 400; }
h1 { font-size: 50px; line-height: 66px; letter-spacing: .06px; position: relative; }
.cursor { position: absolute; left: -1px; top: 3px; width: 3px; height: 59px; background: #777; }
.dot { font-size: 27.500px; line-height: 36px; margin-top: 17px; }
h2 { font-size: 40px; line-height: 53px; margin-top: 80px; }
.li { display: grid; grid-template-columns: 44px auto; margin: 32px 0 0 46px; font-size: 27.500px; line-height: 36px; }
.sub { grid-template-columns: 45px auto; margin: 0 0 0 135px; }
.clip { width: 49px; margin-left: 48px; padding-top: 28px; overflow: hidden; flex: none; }
.card { width: 400px; height: 800px; border: 1px solid #dadce0; border-radius: 14px; background: #fff; padding: 31px 0 0 31px; white-space: nowrap; }
.inner { width: 340px; height: 314px; border: 1px solid #dadce0; }
.ct { font-size: 40px; line-height: 52px; margin: 40px 0 0 -1px; color: #202124; }
.cs { font-size: 25px; line-height: 38px; margin: 22px 0 0 1px; color: #202124; }
.vthumb { width: 16px; height: 38px; border-radius: 8px; background: #dadce0; margin: 7px 0 0 7px; flex: none; }
.hscroll { height: 28px; background: #f8f9fb; padding: 7px 0 0 15px; }
.hthumb { width: 1378px; height: 16px; border-radius: 8px; background: #dadce0; }
.explore { position: absolute; left: 1715px; top: 688px; width: 69px; height: 70px; background: #fafafa; border: 1px solid #d0d3d3; border-radius: 4px; box-shadow: 0 1px 3px rgba(0,0,0,.25); padding: 15px 0 0 16px; }
.explore svg { width: 34px; height: 40px; }
.gram { position: absolute; left: 1773px; top: 650px; width: 50px; height: 50px; filter: drop-shadow(0 2px 2px rgba(0,0,0,.35)); z-index: 2; }

/* side panel */
.side { width: 105px; border-left: 1px solid #dadce0; margin-top: 1px; display: flex; flex-direction: column; align-items: center; gap: 69px; padding: 35px 0 0 4px; }
.side svg { width: 36px; height: 36px; }
.line { width: 37px; height: 1px; background: #dadce0; margin-top: -5px; flex: none; }
.side .sd { width: 26px; height: 8px; margin-top: 11px; }
.side .sc { width: 12px; height: 18px; margin: -4px 4px 0 0; }

/* taskbar */
.task { height: 60px; flex: none; border-top: 1px solid #d3dd9c; display: flex; background: linear-gradient(90deg, #eaef8f 0, #e2ed93 90px, #dce4b5 150px, #dfe6ae 400px, #dfe6a8 570px, #e0eb9b 660px, #e6f296 760px, #e8f396 1100px, #e2ec9e 1250px, #dfe7ae 1400px, #dbe3b8 1640px, #e3ee98 1740px, #e8ea90 1920px); }
.weather { width: 658px; padding: 11px 0 0 27px; flex: none; }
.weather svg { width: 30px; height: 28px; }
.apps { display: flex; height: 58px; flex: none; }
.apps span { width: 55.100px; display: flex; align-items: center; justify-content: center; position: relative; }
.apps svg { width: 29px; height: 29px; position: relative; }
.on::after { content: ""; position: absolute; left: 24px; top: 49px; width: 8px; height: 4px; border-radius: 2px; background: #7f8558; }
.act::before { content: ""; position: absolute; left: 3.500px; top: 5px; width: 48px; height: 48px; border-radius: 5px; background: rgba(255,255,255,.55); border: 1px solid rgba(200,210,150,.5); }
.act::after { left: 18px; width: 20px; background: #0078d4; }
.tray { margin-left: auto; display: flex; height: 58px; align-items: center; color: #1c1c10; }
.t1 { width: 16px; height: 10px; margin-right: 13px; }
.t2 { width: 20px; height: 20px; margin-right: 22px; }
.ita { font-size: 15px; letter-spacing: -.5px; width: 48px; }
.t3, .t4, .t5 { width: 20px; height: 17px; margin-right: 10px; }
.time { width: 84px; text-align: right; font-size: 15px; line-height: 20px; letter-spacing: -.75px; padding-bottom: 2px; margin-right: 12px; }
.t5 { margin-right: 0; }
.t6 { width: 16px; height: 18px; margin-right: 26px; }
```
